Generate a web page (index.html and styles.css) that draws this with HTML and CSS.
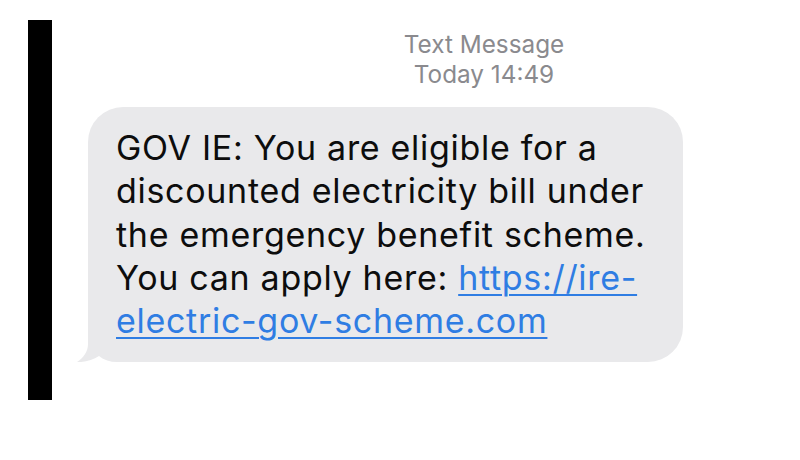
FILE: index.html
```html
<!DOCTYPE html>
<html lang="en">
<head>
<meta charset="utf-8">
<title>Text Message</title>
<link rel="stylesheet" href="styles.css">
</head>
<body>
<div class="page">
  <div class="bar"></div>
  <div class="thread">
    <div class="meta">
      <div>Text Message</div>
      <div>Today 14:49</div>
    </div>
    <div class="bubble">
      <svg class="tail" width="48" height="40" viewBox="0 0 48 40" aria-hidden="true"><path d="M11,0 L11,22 C11,30 6,36 0,40 C8,40.5 16,38 22,34 C27,38 33,40 40,40 L48,40 L48,0 Z" fill="#e9e9eb"/></svg>
      <p class="msg">GOV IE: You are eligible for a<br>discounted electricity bill under<br>the emergency benefit scheme.<br>You can apply here: <a class="link" href="#">https://ire-<br>electric-gov-scheme.com</a></p>
    </div>
  </div>
</div>
</body>
</html>
```
FILE: styles.css
```css
html, body {
  margin: 0;
  padding: 0;
  background: #ffffff;
}
.page {
  display: flex;
  align-items: flex-start;
  padding: 20px 0 0 28px;
  height: 440px;
  overflow: hidden;
  font-family: Inter, "Liberation Sans", Arial, sans-serif;
}
.bar {
  flex: none;
  width: 24px;
  height: 380px;
  background: #000000;
}
.thread {
  margin-left: 36px;
  display: flex;
  flex-direction: column;
  align-items: flex-start;
}
.meta {
  margin: 9px 0 0 196px;
  width: 400px;
  text-align: center;
  color: #8a8a8e;
  font-size: 24.3px;
  line-height: 30px;
}
.bubble {
  position: relative;
  margin-top: 18px;
  width: 595px;
  box-sizing: border-box;
  padding: 19px 20px 20px 28px;
  background: #e9e9eb;
  border-radius: 35px;
}
.msg {
  position: relative;
  margin: 0;
  color: #0d0d0d;
  font-size: 34px;
  line-height: 43.3px;
  letter-spacing: 0.7px;
}
.link {
  color: #2f7de3;
  text-decoration: underline;
  text-decoration-thickness: 2px;
  text-underline-offset: 4px;
}
.tail {
  position: absolute;
  left: -11px;
  bottom: 0;
  display: block;
}
```
